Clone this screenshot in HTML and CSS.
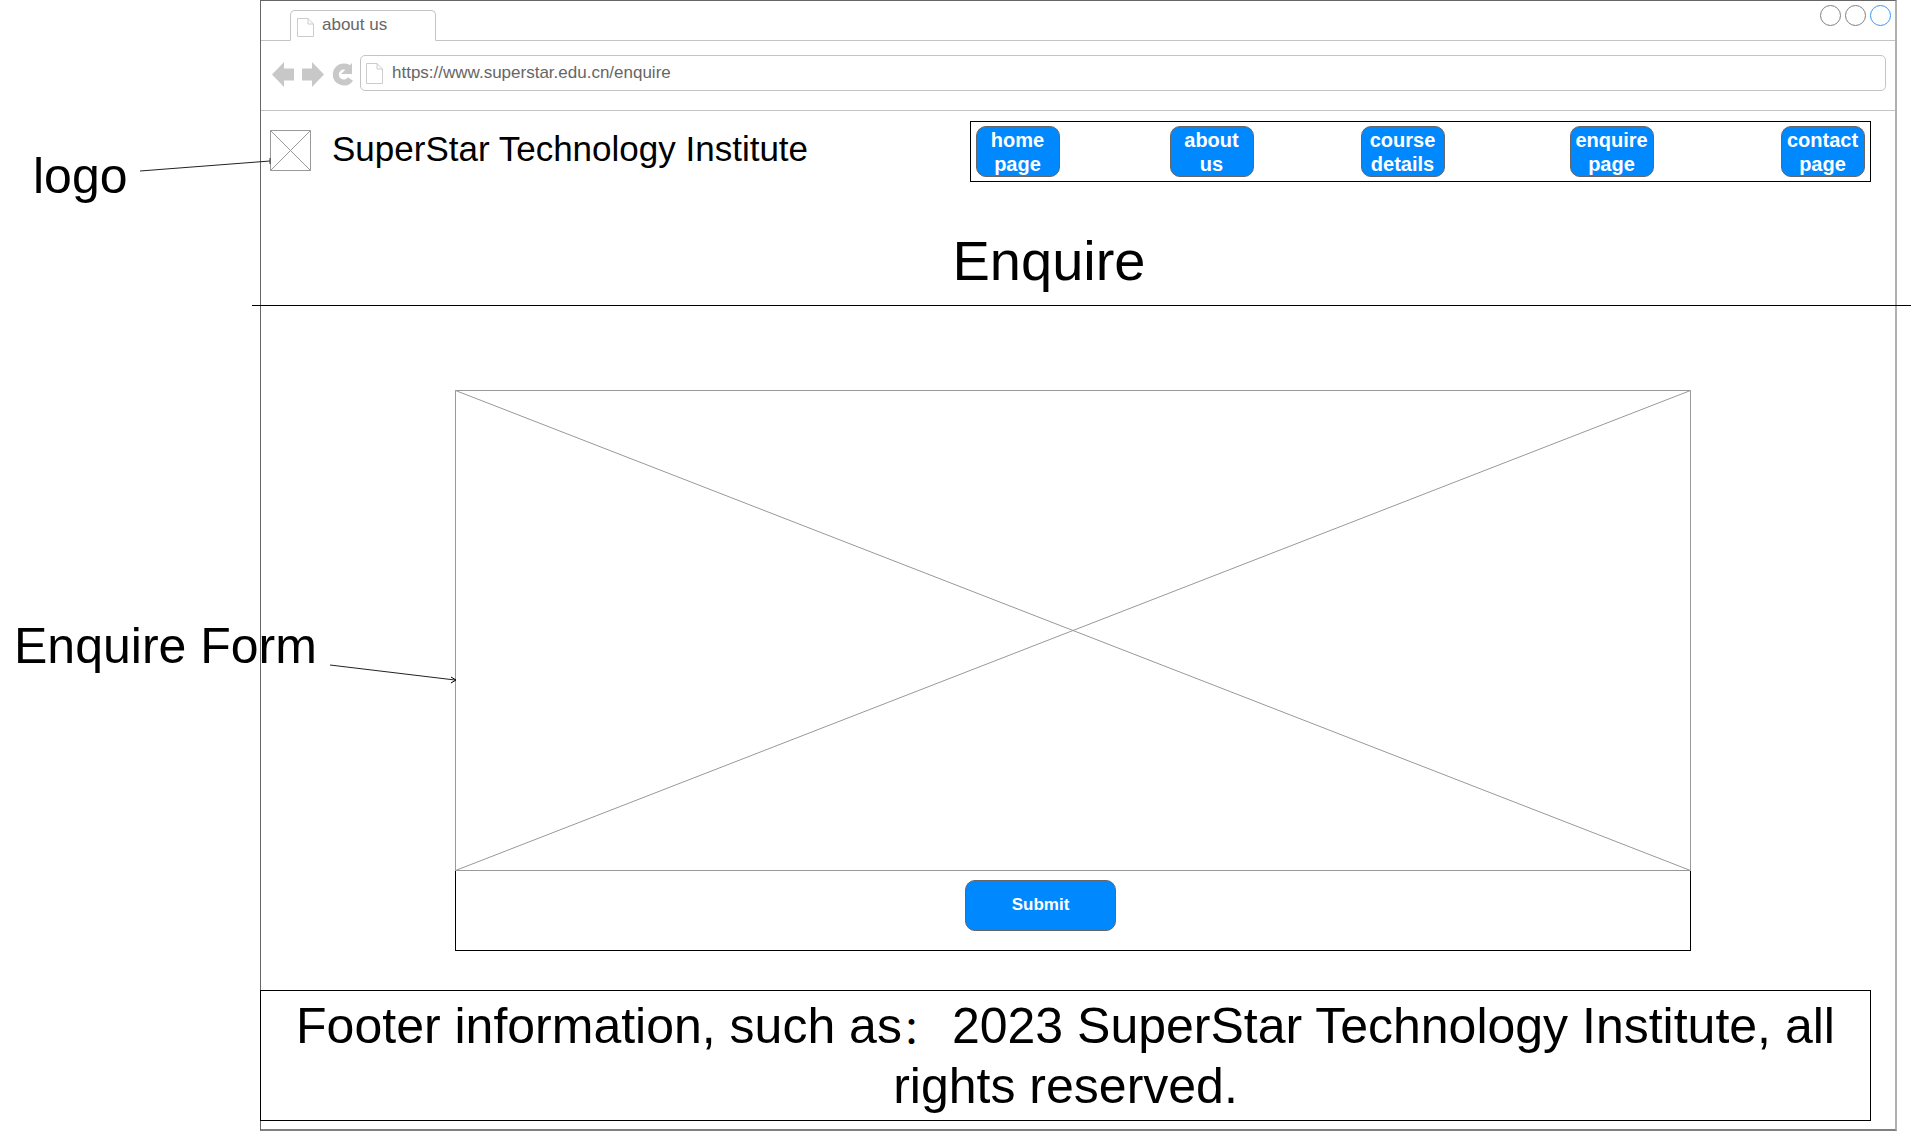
FILE: index.html
```html
<!DOCTYPE html>
<html lang="en">
<head>
    <meta charset="UTF-8">
    <meta name="viewport" content="width=device-width, initial-scale=1.0">
    <title>Enquire</title>
    <link rel="stylesheet" href="styles.css">
</head>
<body>
    <div class="window">
        <div class="tabbar">
            <div class="tab">
                <svg class="doc_icon" width="17" height="19" viewBox="0 0 17 19"><path d="M.5.5H11L16.5 6V18.500H.5ZM11 .5V6H16.500" fill="#fff" stroke="#ccc"/></svg>
                <span>about us</span>
            </div>
            <div class="win_btns">
                <span class="win_btn"></span>
                <span class="win_btn"></span>
                <span class="win_btn win_btn_blue"></span>
            </div>
        </div>

        <div class="addressbar">
            <svg class="nav_icons" width="84" height="26" viewBox="0 0 84 26">
                <path d="M0 12.500L12 0V6.500H22V18.500H12V25Z" fill="#c8c8c8"/>
                <path d="M52 12.500L40 0V6.500H30V18.500H40V25Z" fill="#c8c8c8"/>
                <path d="M78 7.500A8 8 0 1 0 78.500 17" fill="none" stroke="#c8c8c8" stroke-width="6"/>
                <path d="M80 1V12H69Z" fill="#c8c8c8"/>
            </svg>
            <div class="urlbox">
                <svg class="doc_icon" width="17" height="21" viewBox="0 0 17 21"><path d="M.5.5H11L16.5 6V20.500H.5ZM11 .5V6H16.500" fill="#fff" stroke="#ccc"/></svg>
                <span>https://www.superstar.edu.cn/enquire</span>
            </div>
        </div>

        <header class="site_header">
            <svg class="logo" width="41" height="41" viewBox="0 0 41 41">
                <path d="M.5.5H40.500V40.500H.5ZM.5.5L40.500 40.500M40.500.5L.5 40.500" fill="#fff" stroke="#999"/>
            </svg>
            <div class="site_name">SuperStar Technology Institute</div>
            <nav class="menu">
                <a href="#" class="menu_btn">home page</a>
                <a href="#" class="menu_btn">about us</a>
                <a href="#" class="menu_btn">course details</a>
                <a href="#" class="menu_btn">enquire page</a>
                <a href="#" class="menu_btn">contact page</a>
            </nav>
        </header>

        <h1 class="page_title">Enquire</h1>
        <div class="rule"></div>

        <form class="enquire_form">
            <svg class="form_pic" width="1236" height="481" viewBox="0 0 1236 481">
                <path d="M.5.5H1235.500V480.500H.5ZM.5.5L1235.500 480.500M1235.500.5L.5 480.500" fill="#fff" stroke="#999"/>
            </svg>
            <div class="form_bottom">
                <button type="button" class="submit_btn">Submit</button>
            </div>
        </form>

        <footer class="site_footer">Footer information, such as<span class="colon">：</span>2023 SuperStar Technology Institute, all<br>rights reserved.</footer>
    </div>

    <!-- notes on the wireframe -->
    <div class="note note_logo">logo</div>
    <div class="note note_form">Enquire Form</div>
    <svg class="note_lines" width="1913" height="1131" viewBox="0 0 1913 1131">
        <path d="M140 171L270 161" stroke="#222" fill="none"/>
        <path d="M330 665L455 680" stroke="#222" fill="none"/>
        <path d="M451 677L456 680L451 683" stroke="#000" fill="none"/>
        <path d="M270 158V164" stroke="#333" fill="none"/>
    </svg>
</body>
</html>
```

FILE: styles.css
```css
* {
    margin: 0;
    padding: 0;
    box-sizing: border-box;
}

html, body {
    width: 1913px;
    height: 1131px;
    overflow: hidden;
    background: #fff;
}

body {
    position: relative;
    font-family: "Liberation Sans", Arial, "Noto Sans CJK SC", sans-serif;
    color: #000;
}

.window {
    width: 1637px;
    height: 1131px;
    margin-left: 260px;
    border-top: 1px solid #666;
    border-left: 1px solid #666;
    border-right: 2px solid #b0b0b0;
    border-bottom: 2px solid #808080;
}

/* browser chrome */
.tabbar {
    display: flex;
    height: 40px;
    padding: 9px 4px 0 29px;
    border-bottom: 1px solid #c4c4c4;
}

.tab {
    display: flex;
    align-items: flex-start;
    width: 146px;
    height: 31px;
    padding: 7px 0 0 6px;
    background: #fff;
    border: 1px solid #c4c4c4;
    border-bottom: 1px solid #fff;
    border-radius: 5px 5px 0 0;
    font-size: 17px;
    line-height: 19px;
    color: #666;
}

.tab span {
    margin-left: 8px;
    margin-top: -3px;
}

.doc_icon {
    flex: none;
    display: block;
}

.win_btns {
    display: flex;
    gap: 4px;
    margin-left: auto;
    margin-top: -5px;
}

.win_btn {
    width: 21px;
    height: 21px;
    border: 1px solid #808080;
    border-radius: 50%;
}

.win_btn_blue {
    border-color: #3399ff;
}

.addressbar {
    display: flex;
    align-items: flex-start;
    height: 70px;
    padding: 14px 9px 0 11px;
    border-bottom: 1px solid #c4c4c4;
}

.nav_icons {
    flex: none;
    margin-top: 7px;
}

.urlbox {
    display: flex;
    align-items: center;
    flex: 1;
    height: 36px;
    margin-left: 4px;
    padding-left: 5px;
    border: 1px solid #c4c4c4;
    border-radius: 5px;
    font-size: 17px;
    color: #666;
}

.urlbox span {
    margin-left: 9px;
    margin-top: -1px;
}

/* site header */
.site_header {
    display: flex;
    align-items: flex-start;
    height: 81px;
    padding: 10px 24px 0 9px;
}

.logo {
    flex: none;
    margin-top: 9px;
}

.site_name {
    margin-left: 21px;
    margin-top: 8px;
    font-size: 35px;
    line-height: 40px;
    white-space: nowrap;
}

.menu {
    display: flex;
    width: 901px;
    height: 61px;
    margin-left: auto;
    padding: 4px 5px;
    border: 1px solid #000;
}

.menu_btn {
    width: 84px;
    height: 51px;
    padding: 1px 1px 0 0;
    background: #0088ff;
    border: 1px solid #666;
    border-radius: 10px;
    color: #fff;
    font-size: 20px;
    font-weight: bold;
    line-height: 24px;
    text-align: center;
    text-decoration: none;
}

.menu_btn:nth-child(2) {
    margin-left: 110px;
}

.menu_btn:nth-child(3) {
    margin-left: 107px;
}

.menu_btn:nth-child(4) {
    margin-left: 125px;
}

.menu_btn:nth-child(5) {
    margin-left: 127px;
}

.page_title {
    height: 113px;
    padding-right: 58px;
    padding-top: 37px;
    font-size: 56px;
    font-weight: normal;
    line-height: 64px;
    text-align: center;
}

.rule {
    height: 1px;
    margin-left: -9px;
    margin-right: -16px;
    background: #000;
}

/* form */
.enquire_form {
    width: 1236px;
    margin: 84px 0 0 194px;
}

.form_pic {
    display: block;
}

.form_bottom {
    height: 80px;
    padding: 9px 0 0 509px;
    border: 1px solid #000;
    border-top: 0;
}

.submit_btn {
    display: block;
    width: 151px;
    height: 51px;
    padding-bottom: 2px;
    background: #0088ff;
    border: 1px solid #666;
    border-radius: 10px;
    color: #fff;
    font-family: inherit;
    font-size: 17px;
    font-weight: bold;
}

.site_footer {
    width: 1611px;
    height: 131px;
    margin: 39px 0 0 -1px;
    padding-top: 5px;
    border: 1px solid #000;
    font-size: 50px;
    line-height: 60px;
    text-align: center;
}

.colon {
    padding-right: 12px;
    font-size: 38px;
    line-height: 0;
}

/* notes */
.note {
    position: absolute;
    font-size: 50px;
    line-height: 56px;
    white-space: nowrap;
}

.note_logo {
    left: 33px;
    top: 148px;
}

.note_form {
    left: 14px;
    top: 618px;
}

.note_lines {
    position: absolute;
    left: 0;
    top: 0;
    pointer-events: none;
}
```
